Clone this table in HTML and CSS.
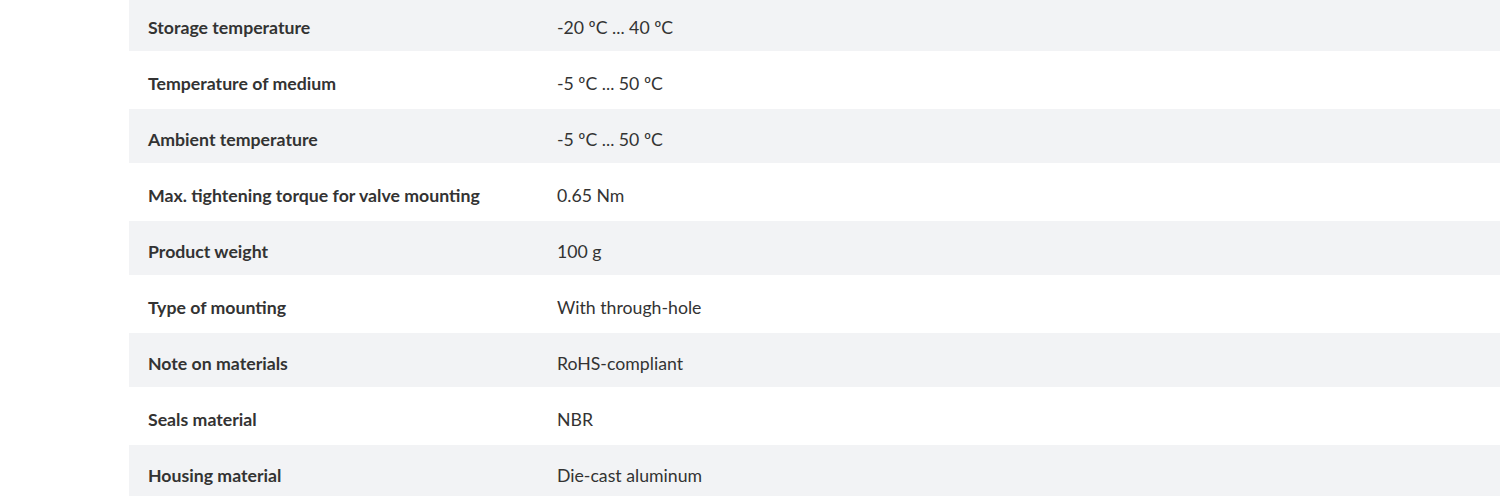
FILE: index.html
```html
<!DOCTYPE html>
<html lang="en">
<head>
<meta charset="utf-8">
<title>Technical data</title>
<link rel="stylesheet" href="styles.css">
</head>
<body>
<div class="page">
  <div class="specs">
    <div class="row odd"><div class="label">Storage temperature</div><div class="value">-20 ºC ... 40 ºC</div></div>
    <div class="row even"><div class="label">Temperature of medium</div><div class="value">-5 ºC ... 50 ºC</div></div>
    <div class="row odd"><div class="label">Ambient temperature</div><div class="value">-5 ºC ... 50 ºC</div></div>
    <div class="row even"><div class="label">Max. tightening torque for valve mounting</div><div class="value">0.65 Nm</div></div>
    <div class="row odd"><div class="label">Product weight</div><div class="value">100 g</div></div>
    <div class="row even"><div class="label">Type of mounting</div><div class="value">With through-hole</div></div>
    <div class="row odd"><div class="label">Note on materials</div><div class="value">RoHS-compliant</div></div>
    <div class="row even"><div class="label">Seals material</div><div class="value">NBR</div></div>
    <div class="row odd"><div class="label">Housing material</div><div class="value">Die-cast aluminum</div></div>
  </div>
</div>
</body>
</html>
```

FILE: styles.css
```css
html, body {
  margin: 0;
  padding: 0;
  background: #ffffff;
  overflow: hidden;
}

.page {
  padding-left: 129px;
  margin-top: -3px;
}

.specs {
  display: flex;
  flex-direction: column;
  font-family: Lato, "Noto Sans", sans-serif;
  font-size: 17.7px;
  color: #333333;
}

.row {
  display: grid;
  grid-template-columns: 428px 1fr;
  align-items: center;
  box-sizing: border-box;
  padding-top: 7px;
}

.row.odd {
  background: #f2f3f5;
  height: 53.5px;
}

.row.even {
  background: #ffffff;
  height: 58.5px;
}

.label {
  padding-left: 19px;
  font-weight: 700;
}

.value {
  font-weight: 400;
}
```
